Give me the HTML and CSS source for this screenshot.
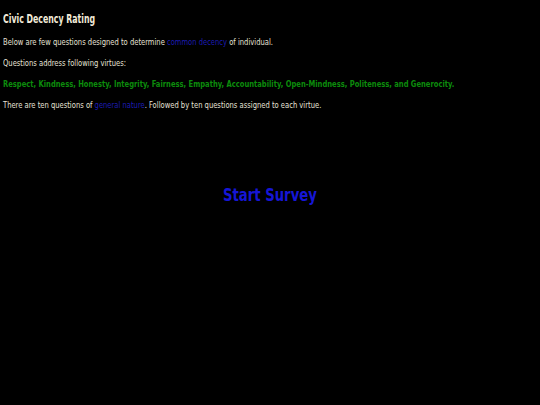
FILE: index.html
```html
<!DOCTYPE html>
<html>
<head>
<meta charset="utf-8">
<link rel="stylesheet" href="styles.css">
</head>
<body>
<div class="intro">
  <h1 class="title">Civic Decency Rating</h1>
  <p class="line">Below are few questions designed to determine <span class="link">common decency</span> of individual.</p>
  <p class="line">Questions address following virtues:</p>
  <p class="line virtues">Respect, Kindness, Honesty, Integrity, Fairness, Empathy, Accountability, Open-Mindness, Politeness, and Generocity.</p>
  <p class="line">There are ten questions of <span class="link">general nature</span>. Followed by ten questions assigned to each virtue.</p>
</div>
<div class="start">
  <a class="start-link">Start Survey</a>
</div>
</body>
</html>
```
FILE: styles.css
```css
html, body {
  margin: 0;
  padding: 0;
  background: #000;
}
body {
  font-family: "DejaVu Sans Condensed", "DejaVu Sans", sans-serif;
  color: #e6e2d6;
  padding: 1px 3px 0;
}
.intro {
  display: flex;
  flex-direction: column;
  align-items: flex-start;
  white-space: nowrap;
}
.title {
  font-size: 11.5px;
  font-weight: bold;
  margin: 11px 0 0;
  line-height: 14px;
  color: #f2ead8;
  transform: scaleX(0.755);
  transform-origin: left center;
}
.line {
  font-size: 9px;
  margin: 10px 0 0;
  line-height: 11px;
  transform: scaleX(0.837);
  transform-origin: left center;
}
.title + .line {
  margin-top: 11px;
}
.link {
  color: #1c1cb4;
}
.virtues {
  color: #0c8c0c;
  font-weight: bold;
}
.start {
  display: flex;
  justify-content: center;
  margin-top: 74px;
}
.start-link {
  color: #1616d6;
  font-weight: bold;
  font-size: 17.5px;
  transform: scaleX(0.84);
}
```
